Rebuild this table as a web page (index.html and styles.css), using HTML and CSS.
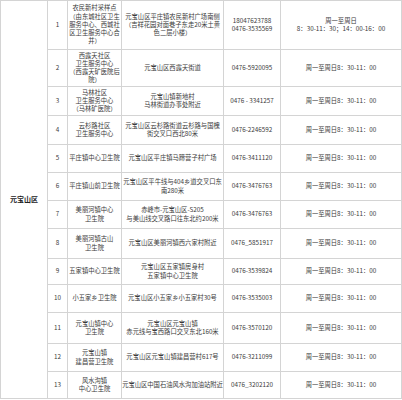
FILE: index.html
```html
<!DOCTYPE html>
<html lang="zh">
<head>
<meta charset="utf-8">
<link rel="stylesheet" href="styles.css">
</head>
<body>
<table class="grid">
<colgroup>
<col class="c-area"><col class="c-no"><col class="c-name"><col class="c-addr"><col class="c-tel"><col class="c-time">
</colgroup>
<tbody>
<tr class="h49">
<td rowspan="13" class="area">元宝山区</td>
<td>1</td>
<td>农民新村采样点<br>（由东城社区卫生<br>服务中心、西城社<br>区卫生服务中心合<br>并）</td>
<td>元宝山区平庄镇农民新村广场南侧<br>（吉祥花园对面巷子东走20米土黄<br>色二层小楼）</td>
<td>18047623788<br>0476-3535569</td>
<td>周一至周日<br>8：30-11：30；14：00-16：00</td>
</tr>
<tr class="h37">
<td>2</td>
<td>西露天社区<br>卫生服务中心<br>（西露天矿医院后<br>院）</td>
<td>元宝山区西露天街道</td>
<td>0476-5920095</td>
<td>周一至周日8：30-11：00</td>
</tr>
<tr class="h29">
<td>3</td>
<td>马林社区<br>卫生服务中心<br>（马林矿医院）</td>
<td>元宝山镇新地村<br>马林街道办事处附近</td>
<td>0476 - 3341257</td>
<td>周一至周日8：30-11：00</td>
</tr>
<tr class="h29">
<td>4</td>
<td>云杉路社区<br>卫生服务中心</td>
<td>元宝山区云杉路街道云杉路与国槐<br>街交叉口西北80米</td>
<td>0476-2246592</td>
<td>周一至周日8：30-11：00</td>
</tr>
<tr class="h28">
<td>5</td>
<td>平庄镇中心卫生院</td>
<td>元宝山区平庄镇马蹄营子村广场</td>
<td>0476-3411120</td>
<td>周一至周日8：30-11：00</td>
</tr>
<tr class="h28">
<td>6</td>
<td>平庄镇山前卫生院</td>
<td>元宝山区平牛线与404乡道交叉口东<br>南280米</td>
<td>0476-3476763</td>
<td>周一至周日8：30-11：00</td>
</tr>
<tr class="h28">
<td>7</td>
<td>美丽河镇中心<br>卫生院</td>
<td>赤峰市-元宝山区-S205<br>与美山线交叉路口往东北约200米</td>
<td>0476-3476763</td>
<td>周一至周日8：30-11：00</td>
</tr>
<tr class="h30">
<td>8</td>
<td>美丽河镇古山<br>卫生院</td>
<td>元宝山区美丽河镇西六家村附近</td>
<td>0476_5851917</td>
<td>周一至周日8：30-11：00</td>
</tr>
<tr class="h26">
<td>9</td>
<td>五家镇中心卫生院</td>
<td>元宝山区五家镇房身村<br>五家镇中心卫生院</td>
<td>0476-3539824</td>
<td>周一至周日8：30-11：00</td>
</tr>
<tr class="h28">
<td>10</td>
<td>小五家乡卫生院</td>
<td>元宝山区小五家乡小五家村30号</td>
<td>0476-3535003</td>
<td>周一至周日8：30-11：00</td>
</tr>
<tr class="h31">
<td>11</td>
<td>元宝山镇中心<br>卫生院</td>
<td>元宝山区元宝山镇<br>赤元线与宝西路口交叉东北160米</td>
<td>0476-3570120</td>
<td>周一至周日8：30-11：00</td>
</tr>
<tr class="h28">
<td>12</td>
<td>元宝山镇<br>建昌营卫生院</td>
<td>元宝山区元宝山镇建昌营村617号</td>
<td>0476-3211099</td>
<td>周一至周日8：30-11：00</td>
</tr>
<tr class="h27">
<td>13</td>
<td>风水沟镇<br>中心卫生院</td>
<td>元宝山区中国石油风水沟加油站附近</td>
<td>0476_3202120</td>
<td>周一至周日8：30-11：00</td>
</tr>
</tbody>
</table>
</body>
</html>
```
FILE: styles.css
```css
html, body {
  margin: 0;
  padding: 0;
  background: #ffffff;
}
.grid {
  border-collapse: collapse;
  table-layout: fixed;
  width: 401px;
  font-family: "Noto Sans CJK SC", "Noto Sans", sans-serif;
  font-size: 6.3px;
  line-height: 8.2px;
  color: #3a3a3a;
}
.c-area { width: 47px; }
.c-no { width: 20px; }
.c-name { width: 54px; }
.c-addr { width: 102px; }
.c-tel { width: 57px; }
.c-time { width: 121px; }
.grid td {
  border: 1px solid #d4d4d4;
  text-align: center;
  vertical-align: middle;
  padding: 0;
  white-space: nowrap;
}
.grid td.area {
  font-weight: bold;
  font-size: 7px;
  color: #222;
}
.h49 { height: 49px; }
.h37 { height: 37px; }
.h31 { height: 31px; }
.h30 { height: 30px; }
.h29 { height: 29px; }
.h28 { height: 28px; }
.h27 { height: 27px; }
.h26 { height: 26px; }
```
